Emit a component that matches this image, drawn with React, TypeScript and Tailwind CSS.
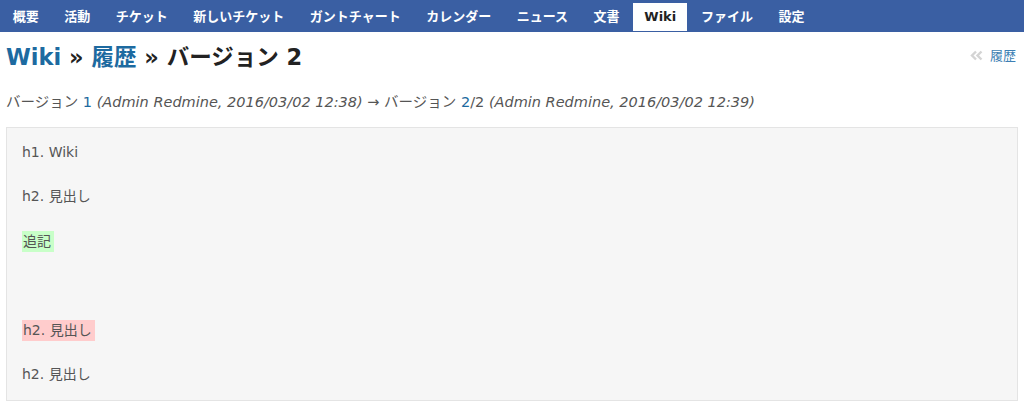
const tabs = ["概要", "活動", "チケット", "新しいチケット", "ガントチャート", "カレンダー", "ニュース", "文書", "Wiki", "ファイル", "設定"]

const font = { fontFamily: '"DejaVu Sans", "Noto Sans CJK JP", sans-serif' }

function HistoryIcon() {
  return (
    <svg width="16" height="11" viewBox="0 0 16 11" className="mr-[5px]">
      <path d="M7 1.5 L3 5.5 L7 9.5" fill="none" stroke="#d4d4d4" strokeWidth="2.4" />
      <path d="M12.5 1.5 L8.5 5.5 L12.5 9.5" fill="none" stroke="#d4d4d4" strokeWidth="2.4" />
    </svg>
  )
}

export default function App() {
  const lines = [
    { text: "h1. Wiki" },
    { text: "" },
    { text: "h2. 見出し" },
    { text: "" },
    { text: "追記", mark: "bg-[#c8ffc8]" },
    { text: "" },
    { text: "" },
    { text: "" },
    { text: "h2. 見出し", mark: "bg-[#ffcccc]" },
    { text: "" },
    { text: "h2. 見出し" },
  ]

  return (
    <div className="w-[1024px] h-[408px] bg-white overflow-hidden" style={font}>
      <div className="h-[32px] bg-[#3a5fa3] flex items-end border-b border-[#3a5fa3]">
        {tabs.map((t) => (
          <div
            key={t}
            className={
              t === "Wiki"
                ? "h-[28px] px-[11px] flex items-center bg-white text-[#222] text-[13px] font-bold mx-[1px]"
                : "h-[28px] px-[11.75px] flex items-center text-white text-[13px] font-bold mx-[1px]"
            }
          >
            {t}
          </div>
        ))}
      </div>

      <div className="px-[6px]">
        <div className="flex items-start justify-between pt-[10px]">
          <h2 className="text-[22.5px] font-bold text-[#222] leading-[30px]">
            <span className="text-[#1d6aa0]">Wiki</span> » <span className="text-[#1d6aa0]">履歴</span> » バージョン 2
          </h2>
          <div className="flex items-center text-[13px] text-[#3d7fb4] pt-[4px] pr-[2px]">
            <HistoryIcon />
            履歴
          </div>
        </div>

        <p className="mt-[20px] text-[14.5px] text-[#555] leading-[20px]">
          バージョン <span className="text-[#1d6aa0]">1</span> <em>(Admin Redmine, 2016/03/02 12:38)</em> → バージョン{" "}
          <span className="text-[#1d6aa0]">2</span>/2 <em>(Admin Redmine, 2016/03/02 12:39)</em>
        </p>

        <div className="mt-[15px] h-[274px] bg-[#f6f6f6] border border-[#e4e4e4] px-[15px] pt-[14px] text-[14px] text-[#555]">
          {lines.map((l, i) => (
            <div key={i} className="h-[22.2px] leading-[21px]">
              {l.mark ? <span className={`${l.mark} inline-block pl-[1px] pr-[3px]`}>{l.text}</span> : l.text}
            </div>
          ))}
        </div>
      </div>
    </div>
  )
}
